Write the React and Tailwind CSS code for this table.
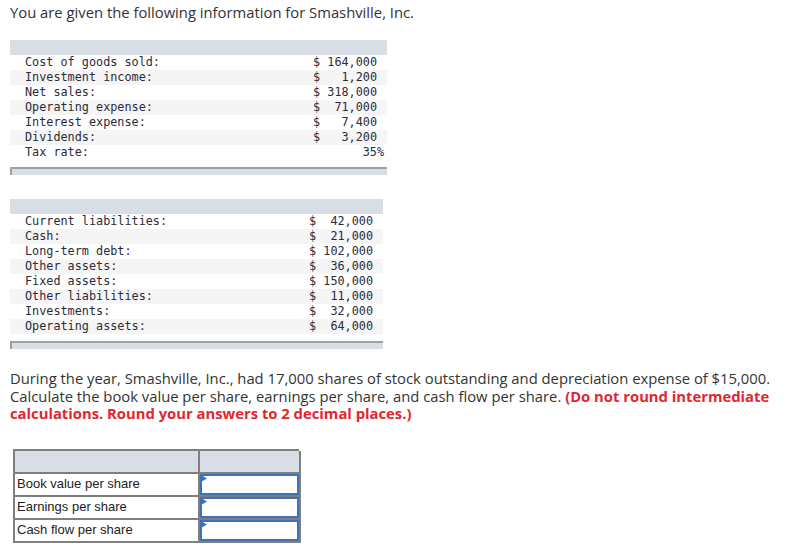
import React from "react";

const t1 = [
  ["Cost of goods sold:", "$ 164,000"],
  ["Investment income:", "$   1,200"],
  ["Net sales:", "$ 318,000"],
  ["Operating expense:", "$  71,000"],
  ["Interest expense:", "$   7,400"],
  ["Dividends:", "$   3,200"],
];

const t2 = [
  ["Current liabilities:", "$  42,000"],
  ["Cash:", "$  21,000"],
  ["Long-term debt:", "$ 102,000"],
  ["Other assets:", "$  36,000"],
  ["Fixed assets:", "$ 150,000"],
  ["Other liabilities:", "$  11,000"],
  ["Investments:", "$  32,000"],
  ["Operating assets:", "$  64,000"],
];

function Row({ label, value, i }) {
  return (
    <div className={`flex h-[15px] items-center ${i % 2 === 1 ? "bg-[#f5f5f5]" : "bg-white"}`}>
      <span className="pl-[15px] flex-1 whitespace-pre">{label}</span>
      <span className="whitespace-pre pr-[10px]">{value}</span>
    </div>
  );
}

function Footer() {
  return <div className="h-[8px] bg-[#d9dde6] border-t-2 border-l-2 border-[#a0a0a0]" />;
}

export default function App() {
  return (
    <div className="w-[789px] h-[554px] bg-white text-[#333] font-['Open_Sans',sans-serif] overflow-hidden">
      <div className="pl-[10px] pt-[3px] text-[14.8px] leading-[18px] text-[#333]">
        You are given the following information for Smashville, Inc.
      </div>

      <div className="ml-[10px] mt-[19px] w-[377px] font-['DejaVu_Sans_Mono',monospace] text-[11.8px] text-[#2b2b3b]">
        <div className="h-[15px] bg-[#d9dde6]" />
        {t1.map((r, i) => (
          <Row key={i} label={r[0]} value={r[1]} i={i} />
        ))}
        <div className="flex h-[16px] items-center bg-white">
          <span className="pl-[15px] flex-1">Tax rate:</span>
          <span className="pr-[3px]">35%</span>
        </div>
        <div className="mt-[6px]">
          <Footer />
        </div>
      </div>

      <div className="ml-[10px] mt-[24px] w-[373px] font-['DejaVu_Sans_Mono',monospace] text-[11.8px] text-[#2b2b3b]">
        <div className="h-[15px] bg-[#d9dde6]" />
        {t2.map((r, i) => (
          <Row key={i} label={r[0]} value={r[1]} i={i} />
        ))}
        <div className="mt-[7px]">
          <Footer />
        </div>
      </div>

      <div className="pl-[10px] mt-[21px] text-[14.8px] leading-[17.5px] text-[#333] whitespace-nowrap">
        During the year, Smashville, Inc., had 17,000 shares of stock outstanding and depreciation expense of $15,000.
        <br />
        Calculate the book value per share, earnings per share, and cash flow per share.{" "}
        <span className="font-bold text-[#e3262e]">(Do not round intermediate</span>
        <br />
        <span className="font-bold text-[#e3262e]">calculations. Round your answers to 2 decimal places.)</span>
      </div>

      <div className="ml-[13px] mt-[26px] w-[286px] font-['Liberation_Sans',sans-serif] text-[13px] text-[#222]">
        <div className="grid grid-cols-[185px_101px] border-t-2 border-l-2 border-[#7f7f7f]">
          <div className="h-[23px] bg-[#d9dde6] border-r-2 border-b-2 border-[#7f7f7f]" />
          <div className="h-[23px] bg-[#d9dde6] border-r-2 border-b-2 border-[#7f7f7f]" />
          {["Book value per share", "Earnings per share", "Cash flow per share"].map((l) => (
            <React.Fragment key={l}>
              <div className="h-[23px] flex items-center pl-[2px] border-r-2 border-b-2 border-[#7f7f7f]">{l}</div>
              <div className="h-[23px] border-r-2 border-b-2 border-[#7f7f7f] relative">
                <div className="absolute inset-0 border-2 border-[#3d72b8]" />
                <svg className="absolute left-[1px] top-[1px]" width="6" height="7" viewBox="0 0 6 7">
                  <polygon points="0,0 6,3.5 0,7" fill="#3d72b8" />
                </svg>
              </div>
            </React.Fragment>
          ))}
        </div>
      </div>
    </div>
  );
}
